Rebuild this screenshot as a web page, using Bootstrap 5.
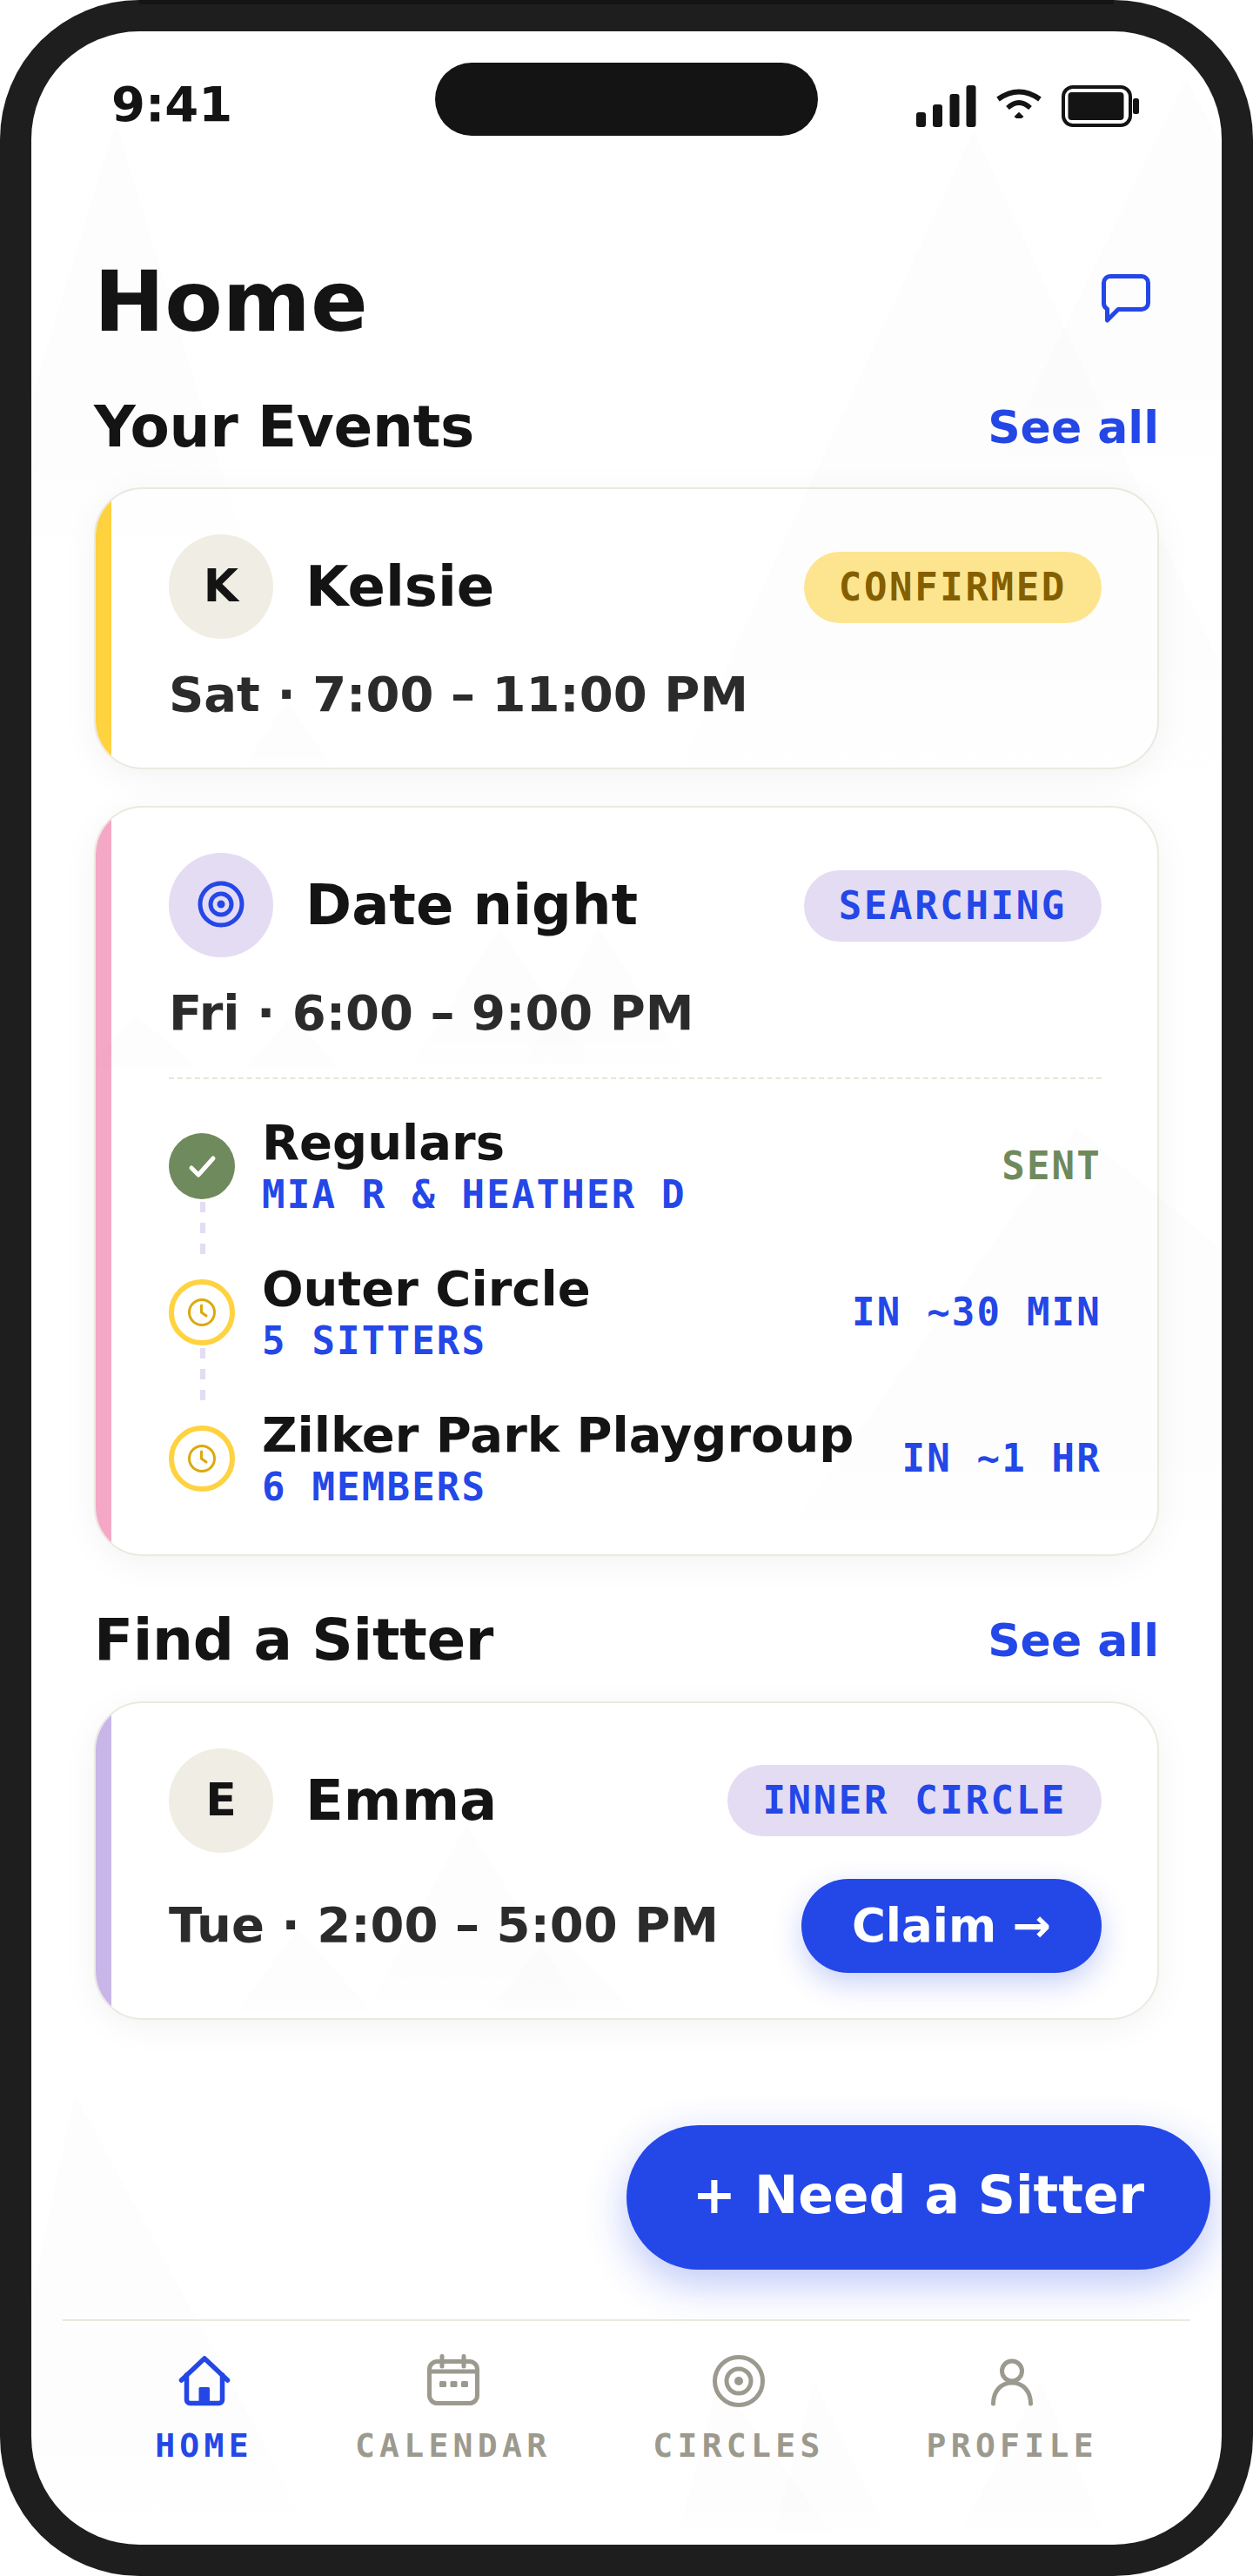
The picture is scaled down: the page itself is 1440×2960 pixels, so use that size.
<!DOCTYPE html>
<html lang="en">

<head>
  <meta charset="UTF-8">
  <meta name="viewport" content="width=device-width, initial-scale=1.0">
  <title>Home</title>
  <link href="https://cdn.jsdelivr.net/npm/bootstrap@5.3.3/dist/css/bootstrap.min.css" rel="stylesheet">
  <style>
    body {
      margin: 0;
      background: #fff;
      font-family: "DejaVu Sans", sans-serif;
      font-weight: 700;
      color: #141414;
    }
    .mono {
      font-family: "DejaVu Sans Mono", monospace;
      font-weight: 700;
    }
    .phone {
      position: relative;
      width: 1440px;
      height: 2960px;
      padding: 36px;
      background: #1e1e1e;
      border-radius: 160px;
      overflow: hidden;
    }
    .phone::before {
      content: "";
      position: absolute;
      top: 0;
      left: 160px;
      right: 160px;
      height: 5px;
      background: #141414;
    }
    .screen {
      position: relative;
      height: 2888px;
      background: #fff;
      border-radius: 124px;
      overflow: hidden;
    }
    .peaks {
      position: absolute;
      inset: 0;
      z-index: 5;
      pointer-events: none;
    }
    .island {
      position: absolute;
      top: 36px;
      left: 464px;
      width: 440px;
      height: 84px;
      background: #141414;
      border-radius: 42px;
    }
    .statusbar {
      height: 118px;
      padding: 50px 95px 0 92px;
    }
    .clock-time {
      font-size: 56px;
      line-height: 68px;
    }
    .status-icons {
      margin-top: 12px;
      gap: 19px;
    }
    .content {
      padding: 133px 72px 0;
    }
    .page-title {
      font-size: 97px;
      line-height: 115px;
      margin: 2px 0 -2px;
      font-weight: 700;
    }
    .chat-btn {
      margin: 26px 8px 0 0;
    }
    .section-head {
      height: 79px;
      margin-top: 49px;
      margin-bottom: 30px;
    }
    .section-head.later {
      margin-top: 57px;
      margin-bottom: 31px;
    }
    .section-title {
      font-size: 66px;
      letter-spacing: -.3px;
      line-height: 79px;
      margin: 0;
      font-weight: 700;
    }
    .see-all {
      font-size: 52px;
      color: #2447e8;
      text-decoration: none;
    }
    .event-card {
      position: relative;
      background: #fff;
      border: 2px solid #ece9e0;
      border-radius: 56px;
      padding: 52px 64px 42px 84px;
      margin-bottom: 42px;
      overflow: hidden;
      box-shadow: 0 8px 40px rgba(0, 0, 0, .05);
    }
    .event-card::before {
      content: "";
      position: absolute;
      top: 0;
      bottom: 0;
      left: 0;
      width: 18px;
      background: var(--accent);
    }
    .accent-yellow { --accent: #ffd23f; }
    .accent-pink { --accent: #f5a8c5; }
    .accent-purple { --accent: #c8b6e8; }
    .avatar {
      width: 120px;
      height: 120px;
      border-radius: 50%;
      background: #f0eee4;
      font-size: 52px;
      padding-bottom: 2px;
    }
    .avatar.lilac {
      background: #e4dcf3;
    }
    .person {
      font-size: 64px;
      line-height: 1.2;
      margin-left: 37px;
    }
    .status-pill {
      font-size: 44px;
      letter-spacing: .06em;
      line-height: 66px;
      padding: 8px 40px;
      margin-top: 2px;
      border-radius: 41px;
      white-space: nowrap;
    }
    .event-card.last .status-pill {
      margin-top: 0;
    }
    .pill-yellow {
      background: #ffe791;
      color: #856000;
    }
    .pill-lilac {
      background: #e4dcf3;
      color: #2447e8;
    }
    .when {
      font-size: 56px;
      line-height: 84px;
      color: #2b2b2b;
      margin-top: 22px;
    }
    .steps {
      border-top: 2px dashed #e8e4d8;
      margin-top: 32px;
      padding-top: 40px;
      padding-bottom: 8px;
    }
    .step {
      position: relative;
      height: 120px;
      margin-bottom: 48px;
    }
    .step:last-child {
      margin-bottom: 0;
    }
    .step:not(:last-child)::after {
      content: "";
      position: absolute;
      top: 101px;
      left: 36px;
      width: 6px;
      height: 60px;
      background: repeating-linear-gradient(#e4dcf3 0 12px, transparent 12px 24px);
    }
    .dot {
      flex: 0 0 76px;
      width: 76px;
      height: 76px;
      border-radius: 50%;
      margin-right: 31px;
    }
    .dot-done {
      background: #6f8a5c;
    }
    .dot-wait {
      border: 6px solid #ffd23f;
      background: #fff;
    }
    .step-text {
      margin-bottom: 3px;
    }
    .step-name {
      font-size: 56px;
      line-height: 67px;
      white-space: nowrap;
    }
    .step-sub {
      font-size: 44px;
      line-height: 53px;
      letter-spacing: 2.2px;
      color: #2447e8;
      white-space: nowrap;
    }
    .step-eta {
      font-size: 44px;
      letter-spacing: 2.2px;
      color: #2447e8;
      white-space: nowrap;
    }
    .step-eta.sent {
      color: #6f8a5c;
    }
    .when-row {
      margin-top: 30px;
    }
    .when-row .when {
      margin-top: 0;
    }
    .event-card.last {
      padding-bottom: 52px;
    }
    .claim-btn {
      background: #2447e8;
      border: 0;
      color: #fff;
      font-size: 53px;
      font-weight: 700;
      line-height: 78px;
      padding: 15px 58px;
      border-radius: 54px;
      box-shadow: 0 12px 32px rgba(36, 71, 232, .25);
    }
    .fab {
      position: absolute;
      top: 2406px;
      right: 13px;
      width: 671px;
      height: 166px;
      padding: 0 0 6px;
      background: #2447e8;
      border: 0;
      border-radius: 83px;
      color: #fff;
      font-size: 60px;
      font-weight: 700;
      box-shadow: 0 16px 48px rgba(36, 71, 232, .3);
      z-index: 3;
    }
    .tabbar {
      position: absolute;
      left: 36px;
      right: 36px;
      top: 2629px;
      border-top: 2px solid #ece9de;
      padding-top: 37px;
      gap: 117px;
    }
    .tab {
      color: #9c9a8e;
      text-decoration: none;
    }
    .tab.active {
      color: #2447e8;
    }
    .tab-label {
      font-size: 38px;
      letter-spacing: 5.3px;
      line-height: 46px;
      margin-top: 19px;
    }
  </style>
</head>

<body>
  <div class="phone">
    <div class="screen">
      <div class="island"></div>

      <div class="statusbar d-flex justify-content-between align-items-start">
        <span class="clock-time">9:41</span>
        <div class="status-icons d-flex">
          <svg width="70" height="48" viewBox="0 0 70 48" fill="#141414">
            <rect x="1" y="31" width="11" height="17" rx="3"/>
            <rect x="20" y="22" width="11" height="26" rx="3"/>
            <rect x="39.500" y="10" width="11" height="38" rx="3"/>
            <rect x="58.500" y="0" width="11" height="48" rx="3"/>
          </svg>
          <svg width="60" height="42" viewBox="0 0 60 42" fill="none" stroke="#141414">
            <path d="M6 16Q30-1 54 16" stroke-width="6"/>
            <path d="M17 26Q30 14 43 26" stroke-width="5.500"/>
            <path d="M30 30.700 35.500 36 33 38H27L24.500 36Z" fill="#141414" stroke="none"/>
          </svg>
          <svg width="89" height="48" viewBox="0 0 89 48" fill="#141414">
            <rect x="2" y="2" width="77" height="44" rx="11" fill="none" stroke="#141414" stroke-width="4"/>
            <rect x="7.500" y="8" width="64" height="32" rx="4"/>
            <rect x="82" y="15" width="7" height="18" rx="2.500"/>
          </svg>
        </div>
      </div>

      <div class="content">
        <div class="d-flex justify-content-between align-items-start">
          <h1 class="page-title">Home</h1>
          <svg class="chat-btn" width="60" height="60" viewBox="0 0 60 60" fill="none" stroke="#2447e8" stroke-width="5" stroke-linejoin="round">
            <path d="M12 4.500H48A7.500 7.500 0 0 1 55.500 12V35A7.500 7.500 0 0 1 48 42.500H21L8.500 55V42A7.500 7.500 0 0 1 4.500 35V12A7.500 7.500 0 0 1 12 4.500Z"/>
          </svg>
        </div>

        <div class="section-head d-flex justify-content-between align-items-center">
          <h2 class="section-title">Your Events</h2>
          <a href="#" class="see-all">See all</a>
        </div>

        <div class="event-card accent-yellow">
          <div class="d-flex align-items-center">
            <div class="avatar d-flex align-items-center justify-content-center">K</div>
            <div class="person flex-grow-1">Kelsie</div>
            <span class="status-pill pill-yellow mono">CONFIRMED</span>
          </div>
          <div class="when">Sat · 7:00 – 11:00 PM</div>
        </div>

        <div class="event-card accent-pink">
          <div class="d-flex align-items-center">
            <div class="avatar lilac d-flex align-items-center justify-content-center">
              <svg width="60" height="60" viewBox="0 0 60 60" fill="none" stroke="#2447e8" stroke-width="5">
                <circle cx="30" cy="30" r="24"/>
                <circle cx="30" cy="30" r="12"/>
                <circle cx="30" cy="30" r="4.500" fill="#2447e8" stroke="none"/>
              </svg>
            </div>
            <div class="person flex-grow-1">Date night</div>
            <span class="status-pill pill-lilac mono">SEARCHING</span>
          </div>
          <div class="when">Fri · 6:00 – 9:00 PM</div>

          <div class="steps">
            <div class="step d-flex align-items-center">
              <div class="dot dot-done d-flex align-items-center justify-content-center">
                <svg width="76" height="76" viewBox="0 0 76 76" fill="none" stroke="#fff" stroke-width="5" stroke-linecap="round" stroke-linejoin="round">
                  <path d="M26 40 34 48 51 29"/>
                </svg>
              </div>
              <div class="step-text flex-grow-1">
                <div class="step-name">Regulars</div>
                <div class="step-sub mono">MIA R &amp; HEATHER D</div>
              </div>
              <div class="step-eta sent mono">SENT</div>
            </div>
            <div class="step d-flex align-items-center">
              <div class="dot dot-wait d-flex align-items-center justify-content-center">
                <svg width="34" height="34" viewBox="0 0 34 34" fill="none" stroke="#dca90a" stroke-width="3" stroke-linecap="round" stroke-linejoin="round">
                  <circle cx="17" cy="17" r="14.500"/>
                  <path d="M16.500 9V17L22 21"/>
                </svg>
              </div>
              <div class="step-text flex-grow-1">
                <div class="step-name">Outer Circle</div>
                <div class="step-sub mono">5 SITTERS</div>
              </div>
              <div class="step-eta mono">IN ~30 MIN</div>
            </div>
            <div class="step d-flex align-items-center">
              <div class="dot dot-wait d-flex align-items-center justify-content-center">
                <svg width="34" height="34" viewBox="0 0 34 34" fill="none" stroke="#dca90a" stroke-width="3" stroke-linecap="round" stroke-linejoin="round">
                  <circle cx="17" cy="17" r="14.500"/>
                  <path d="M16.500 9V17L22 21"/>
                </svg>
              </div>
              <div class="step-text flex-grow-1">
                <div class="step-name">Zilker Park Playgroup</div>
                <div class="step-sub mono">6 MEMBERS</div>
              </div>
              <div class="step-eta mono">IN ~1 HR</div>
            </div>
          </div>
        </div>

        <div class="section-head later d-flex justify-content-between align-items-center">
          <h2 class="section-title">Find a Sitter</h2>
          <a href="#" class="see-all">See all</a>
        </div>

        <div class="event-card last accent-purple">
          <div class="d-flex align-items-center">
            <div class="avatar d-flex align-items-center justify-content-center">E</div>
            <div class="person flex-grow-1">Emma</div>
            <span class="status-pill pill-lilac mono">INNER CIRCLE</span>
          </div>
          <div class="when-row d-flex justify-content-between align-items-baseline">
            <div class="when">Tue · 2:00 – 5:00 PM</div>
            <button type="button" class="btn claim-btn">Claim →</button>
          </div>
        </div>
      </div>

      <button type="button" class="btn fab">+ Need a Sitter</button>

      <nav class="tabbar d-flex justify-content-center">
        <a href="#" class="tab active d-flex flex-column align-items-center">
          <svg width="64" height="64" viewBox="0 0 64 64" fill="none" stroke="currentColor" stroke-width="5.500" stroke-linecap="round" stroke-linejoin="round">
            <path d="M5.500 31 32 6 58.500 31"/>
            <path d="M11.500 25V53A4 4 0 0 0 15.500 57.500H48.500A4 4 0 0 0 52.500 53V25"/>
            <rect x="25.500" y="39" width="12.500" height="18" rx="1.500" fill="currentColor" stroke="none"/>
          </svg>
          <span class="tab-label mono">HOME</span>
        </a>
        <a href="#" class="tab d-flex flex-column align-items-center">
          <svg width="64" height="64" viewBox="0 0 64 64" fill="none" stroke="currentColor" stroke-width="5" stroke-linecap="round">
            <rect x="4.500" y="9.500" width="55" height="48" rx="9"/>
            <path d="M19 3.500V15M44 3.500V15M4.500 21H59.500"/>
            <rect x="16" y="32" width="8" height="7" rx="1.500" fill="currentColor" stroke="none"/>
            <rect x="28.500" y="32" width="8" height="7" rx="1.500" fill="currentColor" stroke="none"/>
            <rect x="41" y="32" width="8" height="7" rx="1.500" fill="currentColor" stroke="none"/>
          </svg>
          <span class="tab-label mono">CALENDAR</span>
        </a>
        <a href="#" class="tab d-flex flex-column align-items-center">
          <svg width="64" height="64" viewBox="0 0 64 64" fill="none" stroke="currentColor" stroke-width="5">
            <circle cx="32" cy="32" r="27.500"/>
            <circle cx="32" cy="32" r="14"/>
            <circle cx="32" cy="32" r="5" fill="currentColor" stroke="none"/>
          </svg>
          <span class="tab-label mono">CIRCLES</span>
        </a>
        <a href="#" class="tab d-flex flex-column align-items-center">
          <svg width="64" height="64" viewBox="0 0 64 64" fill="none" stroke="currentColor" stroke-width="5" stroke-linecap="round">
            <circle cx="32" cy="20.500" r="11.500"/>
            <path d="M10.500 58C10.500 44 19 34 32 34S53.500 44 53.500 58"/>
          </svg>
          <span class="tab-label mono">PROFILE</span>
        </a>
      </nav>

      <svg class="peaks" width="1368" height="2888" viewBox="0 0 1368 2888">
        <defs>
          <linearGradient id="peakFade" x1="0" y1="0" x2="0" y2="1">
            <stop offset="0" stop-color="#000" stop-opacity=".009"/>
            <stop offset=".7" stop-color="#000" stop-opacity=".009"/>
            <stop offset="1" stop-color="#000" stop-opacity="0"/>
          </linearGradient>
        </defs>
        <g fill="url(#peakFade)">
          <path d="M97 104 -60 620H254Z"/>
          <path d="M1083 114 720 900H1446Z"/>
          <path d="M1327 54 1100 520H1368V130Z"/>
          <path d="M294 770 240 850H350Z"/>
          <path d="M538 1030 430 1198H650Z"/>
          <path d="M652 1030 560 1198H760Z"/>
          <path d="M120 1130 60 1198H200Z"/>
          <path d="M300 1130 240 1198H360Z"/>
          <path d="M1200 1260 850 1750H1368V1400Z"/>
          <path d="M500 2060 380 2284H640Z"/>
          <path d="M306 2180 230 2284H400Z"/>
          <path d="M600 2180 520 2284H700Z"/>
          <path d="M50 2370 -60 2888H330Z"/>
          <path d="M790 2700 740 2888H930Z"/>
          <path d="M900 2700 850 2888H990Z"/>
          <path d="M1160 2700 1060 2888H1240Z"/>
        </g>
      </svg>
    </div>
  </div>

  <script src="https://cdn.jsdelivr.net/npm/bootstrap@5.3.3/dist/js/bootstrap.bundle.min.js"></script>
</body>

</html>
